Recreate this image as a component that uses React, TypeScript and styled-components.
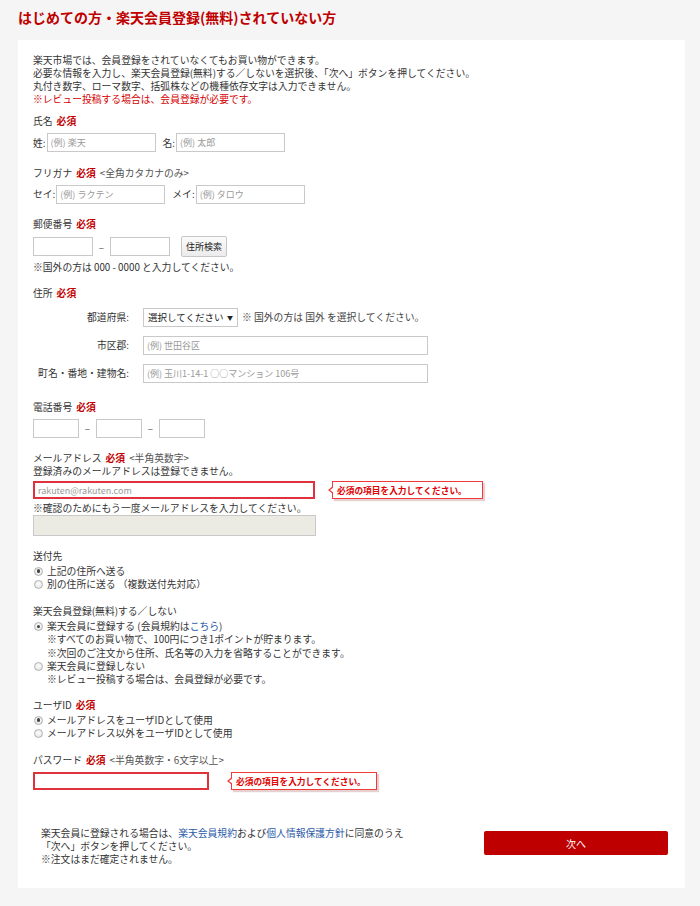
import React from "react";
import styled, { createGlobalStyle } from "styled-components";

const Global = createGlobalStyle`
  html, body { margin: 0; padding: 0; }
  body {
    background: #f5f5f5;
    font-family: "Noto Sans CJK JP", "Noto Sans", sans-serif;
    color: #333;
    font-size: 9.8px;
  }
  * { box-sizing: border-box; }
`;

const Page = styled.div`
  padding: 9px 15px 18px 18px;
`;

const Title = styled.h1`
  margin: 0 0 15px 0;
  font-size: 14px;
  line-height: 16px;
  font-weight: 700;
  color: #bf0000;
`;

const Panel = styled.div`
  background: #fff;
  width: 667px;
  padding: 13.5px 17px 22px 15px;
`;

const Para = styled.div`
  line-height: 13px;
`;

const RedText = styled.span`
  color: #d40000;
`;

const Section = styled.div<{ $mt: number }>`
  margin-top: ${(p) => p.$mt}px;
`;

const Label = styled.div`
  line-height: 13px;
  color: #333;
`;

const Must = styled.span`
  color: #bf0000;
  font-weight: 700;
  margin-left: 4px;
`;

const Note = styled.span`
  color: #555;
  margin-left: 4px;
`;

const Row = styled.div<{ $mt?: number }>`
  display: flex;
  align-items: center;
  margin-top: ${(p) => p.$mt ?? 5}px;
`;

const FieldLabel = styled.span<{ $ml?: number }>`
  margin-left: ${(p) => p.$ml ?? 0}px;
  margin-right: 1px;
  white-space: nowrap;
`;

const Input = styled.input<{ $w: number; $h?: number; $error?: boolean; $disabled?: boolean }>`
  width: ${(p) => p.$w}px;
  height: ${(p) => p.$h ?? 19}px;
  border: ${(p) => (p.$error ? "2px solid #e0323c" : "1px solid #c9c9c9")};
  background: ${(p) => (p.$disabled ? "#ebebe4" : "#fff")};
  padding: 0 3px;
  font-family: inherit;
  font-size: 9px;
  color: #333;
  outline: none;
  margin: 0;
  &::placeholder { color: #9a9a9a; }
`;

const Dash = styled.span`
  width: 17px;
  text-align: center;
  color: #555;
`;

const Button = styled.button`
  height: 21px;
  width: 46px;
  margin-left: 11px;
  padding: 0;
  border: 1px solid #c6c6c6;
  border-radius: 2px;
  background: linear-gradient(#fafafa, #ececec);
  font-family: inherit;
  font-size: 9px;
  color: #222;
`;

const AddrGrid = styled.div`
  display: grid;
  grid-template-columns: 96px 1fr;
  column-gap: 14px;
  row-gap: 9px;
  margin-top: 8px;
  align-items: center;
`;

const AddrLabel = styled.div`
  text-align: right;
  white-space: nowrap;
`;

const Select = styled.div`
  width: 95px;
  height: 19px;
  border: 1px solid #c9c9c9;
  display: flex;
  align-items: center;
  justify-content: space-between;
  padding: 0 4px;
  color: #222;
  font-size: 9.5px;
`;

const Arrow = styled.span`
  font-size: 6px;
`;

const SelectNote = styled.span`
  margin-left: 4px;
  color: #444;
`;

const Tip = styled.div<{ $ml: number; $w: number }>`
  position: relative;
  margin-left: ${(p) => p.$ml}px;
  width: ${(p) => p.$w}px;
  height: 18px;
  border: 1px solid #f03a3a;
  background: #fff;
  box-shadow: 2px 2px 1px rgba(200, 150, 150, 0.45);
  color: #e00000;
  font-weight: 700;
  font-size: 8.7px;
  display: flex;
  align-items: center;
  padding-left: 4px;
  white-space: nowrap;
  &::before {
    content: "";
    position: absolute;
    left: -5px;
    top: 4px;
    border-style: solid;
    border-width: 4.5px 5px 4.5px 0;
    border-color: transparent #f03a3a transparent transparent;
  }
  &::after {
    content: "";
    position: absolute;
    left: -3.5px;
    top: 5px;
    border-style: solid;
    border-width: 3.5px 4px 3.5px 0;
    border-color: transparent #fff transparent transparent;
  }
`;

const Line = styled.div<{ $mt?: number }>`
  line-height: 13px;
  margin-top: ${(p) => p.$mt ?? 0}px;
`;

const RadioList = styled.div`
  margin-top: 2px;
`;

const RadioRow = styled.div`
  display: flex;
  align-items: center;
  line-height: 13.3px;
`;

const Radio = styled.span<{ $on?: boolean }>`
  width: 9px;
  height: 9px;
  border-radius: 50%;
  border: 1px solid #b0b0b0;
  background: radial-gradient(circle at 50% 40%, #fdfdfd, #e0e0e0);
  margin-left: 1px;
  margin-right: 4px;
  display: inline-flex;
  align-items: center;
  justify-content: center;
  flex: none;
  &::after {
    content: "";
    width: 3.5px;
    height: 3.5px;
    border-radius: 50%;
    background: ${(p) => (p.$on ? "#444" : "transparent")};
  }
`;

const SubLine = styled.div`
  padding-left: 14px;
  line-height: 13.3px;
`;

const Link = styled.span`
  color: #2a5aa8;
`;

const Footer = styled.div`
  margin-top: 37px;
  display: flex;
  justify-content: space-between;
  align-items: flex-start;
  padding-left: 8px;
`;

const FooterText = styled.div`
  line-height: 13px;
`;

const NextButton = styled.button`
  margin-top: 4px;
  width: 184px;
  height: 24px;
  border: none;
  border-radius: 2px;
  background: #bf0000;
  color: #fff;
  font-family: inherit;
  font-size: 10px;
  padding: 0;
`;

export default function App() {
  return (
    <>
      <Global />
      <Page>
        <Title>はじめての方・楽天会員登録(無料)されていない方</Title>
        <Panel>
          <Para>
            楽天市場では、会員登録をされていなくてもお買い物ができます。
            <br />
            必要な情報を入力し、楽天会員登録(無料)する／しないを選択後、「次へ」ボタンを押してください。
            <br />
            丸付き数字、ローマ数字、括弧株などの機種依存文字は入力できません。
            <br />
            <RedText>※レビュー投稿する場合は、会員登録が必要です。</RedText>
          </Para>

          <Section $mt={9}>
            <Label>
              氏名<Must>必須</Must>
            </Label>
            <Row $mt={5.5}>
              <FieldLabel>姓:</FieldLabel>
              <Input $w={109} placeholder="(例) 楽天" />
              <FieldLabel $ml={7}>名:</FieldLabel>
              <Input $w={109} placeholder="(例) 太郎" />
            </Row>
          </Section>

          <Section $mt={14.5}>
            <Label>
              フリガナ<Must>必須</Must>
              <Note>&lt;全角カタカナのみ&gt;</Note>
            </Label>
            <Row>
              <FieldLabel>セイ:</FieldLabel>
              <Input $w={109} placeholder="(例) ラクテン" />
              <FieldLabel $ml={7}>メイ:</FieldLabel>
              <Input $w={109} placeholder="(例) タロウ" />
            </Row>
          </Section>

          <Section $mt={14.5}>
            <Label>
              郵便番号<Must>必須</Must>
            </Label>
            <Row>
              <Input $w={60} />
              <Dash>–</Dash>
              <Input $w={60} />
              <Button>住所検索</Button>
            </Row>
            <Line $mt={3.5}>※国外の方は 000 - 0000 と入力してください。</Line>
          </Section>

          <Section $mt={13}>
            <Label>
              住所<Must>必須</Must>
            </Label>
            <AddrGrid>
              <AddrLabel>都道府県:</AddrLabel>
              <Row $mt={0}>
                <Select>
                  <span>選択してください</span>
                  <Arrow>▼</Arrow>
                </Select>
                <SelectNote>※ 国外の方は 国外 を選択してください。</SelectNote>
              </Row>
              <AddrLabel>市区郡:</AddrLabel>
              <Input $w={285} placeholder="(例) 世田谷区" />
              <AddrLabel>町名・番地・建物名:</AddrLabel>
              <Input $w={285} placeholder="(例) 玉川1-14-1 ○○マンション 106号" />
            </AddrGrid>
          </Section>

          <Section $mt={18}>
            <Label>
              電話番号<Must>必須</Must>
            </Label>
            <Row>
              <Input $w={46} />
              <Dash>–</Dash>
              <Input $w={46} />
              <Dash>–</Dash>
              <Input $w={46} />
            </Row>
          </Section>

          <Section $mt={14.5}>
            <Label>
              メールアドレス<Must>必須</Must>
              <Note>&lt;半角英数字&gt;</Note>
            </Label>
            <Line>登録済みのメールアドレスは登録できません。</Line>
            <Row $mt={3}>
              <Input $w={282} $h={18} $error placeholder="rakuten@rakuten.com" />
              <Tip $ml={17} $w={151}>必須の項目を入力してください。</Tip>
            </Row>
            <Line $mt={2.5}>※確認のためにもう一度メールアドレスを入力してください。</Line>
            <Row $mt={0.5}>
              <Input $w={283} $h={21} $disabled />
            </Row>
          </Section>

          <Section $mt={13.5}>
            <Label>送付先</Label>
            <RadioList>
              <RadioRow>
                <Radio $on />
                上記の住所へ送る
              </RadioRow>
              <RadioRow>
                <Radio />
                別の住所に送る （複数送付先対応）
              </RadioRow>
            </RadioList>
          </Section>

          <Section $mt={14}>
            <Label>楽天会員登録(無料)する／しない</Label>
            <RadioList>
              <RadioRow>
                <Radio $on />
                楽天会員に登録する (会員規約は<Link>こちら</Link>)
              </RadioRow>
              <SubLine>※すべてのお買い物で、100円につき1ポイントが貯まります。</SubLine>
              <SubLine>※次回のご注文から住所、氏名等の入力を省略することができます。</SubLine>
              <RadioRow>
                <Radio />
                楽天会員に登録しない
              </RadioRow>
              <SubLine>※レビュー投稿する場合は、会員登録が必要です。</SubLine>
            </RadioList>
          </Section>

          <Section $mt={12}>
            <Label>
              ユーザID<Must>必須</Must>
            </Label>
            <RadioList>
              <RadioRow>
                <Radio $on />
                メールアドレスをユーザIDとして使用
              </RadioRow>
              <RadioRow>
                <Radio />
                メールアドレス以外をユーザIDとして使用
              </RadioRow>
            </RadioList>
          </Section>

          <Section $mt={14}>
            <Label>
              パスワード<Must>必須</Must>
              <Note>&lt;半角英数字・6文字以上&gt;</Note>
            </Label>
            <Row>
              <Input $w={176} $h={18} $error type="password" />
              <Tip $ml={22} $w={146}>必須の項目を入力してください。</Tip>
            </Row>
          </Section>

          <Footer>
            <FooterText>
              楽天会員に登録される場合は、<Link>楽天会員規約</Link>および<Link>個人情報保護方針</Link>に同意のうえ
              <br />
              「次へ」ボタンを押してください。
              <br />
              ※注文はまだ確定されません。
            </FooterText>
            <NextButton>次へ</NextButton>
          </Footer>
        </Panel>
      </Page>
    </>
  );
}
